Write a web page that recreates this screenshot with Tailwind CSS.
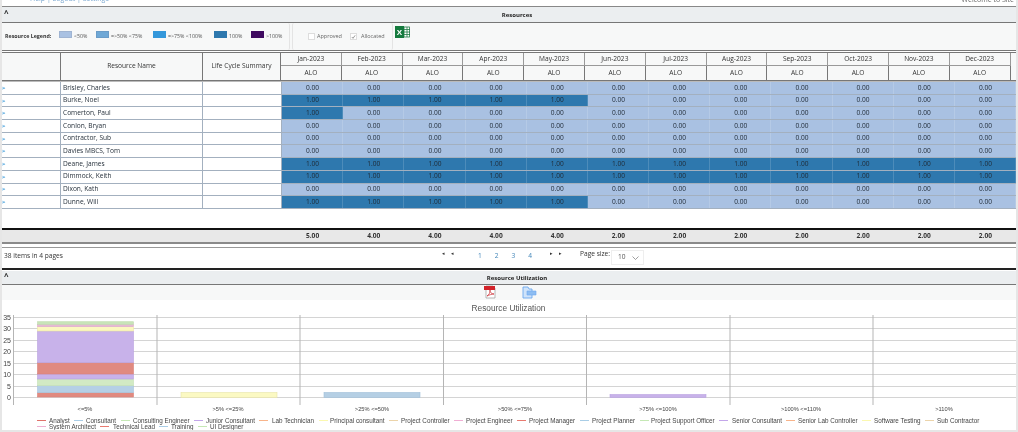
<!DOCTYPE html>
<html>
<head>
<meta charset="utf-8">
<script src="https://cdn.jsdelivr.net/npm/@tailwindcss/browser@4"></script>
</head>
<body class="bg-[#e4e4e4]">
<div class="w-[1018px] h-[432px] overflow-hidden bg-[#e6e6e6] px-[2px] pb-[2px] font-['Open_Sans',sans-serif] text-[6.6px] leading-none text-[#333] blur-[0.25px]">
<div class="w-[1014px] h-[430px] bg-white flex flex-col">

<div class="h-[6px] relative overflow-hidden border-b border-[#888] box-content">
  <span class="absolute left-[28px] top-[-5px] text-[7px] text-[#7aa7d0]">Help | Logout | Settings</span>
  <span class="absolute right-[2px] top-[-4px] text-[7px] text-[#666]">Welcome to Site</span>
</div>

<div class="h-[15px] bg-[#ebeef0] border-b border-[#777] box-content flex items-center relative">
  <span class="absolute left-[2px] top-[2px] text-[8px] font-bold text-[#222]">^</span>
  <span class="flex-1 text-center font-bold text-[6px] text-[#222] pl-[16px] pt-[1px]">Resources</span>
</div>

<div class="h-[27px] bg-[#f7f8f8] border-b border-[#777] box-content flex items-center">
  <div class="h-[27px] w-[288px] border-r border-[#e4e4e4] rounded-[2px] flex items-center pl-[3px] text-[5.3px] text-[#555]">
    <span class="font-bold text-[#333] w-[54px]">Resource Legend:</span>
    <span class="w-[13px] h-[7px] mt-[-5px] bg-[#a9c1e2] border border-[#9fb4d2]"></span><span class="ml-[2px] w-[22px]">&lt;50%</span>
    <span class="w-[13px] h-[7px] mt-[-5px] bg-[#6fa8d6] border border-[#6a9cc8]"></span><span class="ml-[2px] w-[42px]">=&gt;50% &lt;75%</span>
    <span class="w-[13px] h-[7px] mt-[-5px] bg-[#3498db]"></span><span class="ml-[2px] w-[46px]">=&gt;75% &lt;100%</span>
    <span class="w-[13px] h-[7px] mt-[-5px] bg-[#2e78ae]"></span><span class="ml-[2px] w-[22px]">100%</span>
    <span class="w-[13px] h-[7px] mt-[-5px] bg-[#3f0a60]"></span><span class="ml-[2px]">&gt;100%</span>
  </div>
  <div class="h-[27px] w-[101px] border-x border-[#e4e4e4] rounded-[2px] flex items-center pl-[15px] text-[5.5px] text-[#666] ml-[2px]">
    <span class="w-[7px] h-[7px] border border-[#ddd] bg-white"></span><span class="ml-[2px] w-[33px]">Approved</span>
    <span class="w-[7px] h-[7px] border border-[#ddd] bg-white flex items-center justify-center">
      <svg width="6" height="6" viewBox="0 0 6 6"><path d="M1 3l1.4 1.6L5 1" fill="none" stroke="#666" stroke-width=".8"/></svg>
    </span><span class="ml-[4px]">Allocated</span>
  </div>
  <svg class="ml-[2px] mt-[-10px]" width="15" height="12" viewBox="0 0 15 12">
    <rect x="6" y="1" width="8.5" height="10" fill="#fff" stroke="#1f7a45" stroke-width=".8"/>
    <path d="M9 1v10M12 1v10M6 3.5h9M6 6h9M6 8.5h9" stroke="#1f7a45" stroke-width=".8"/>
    <rect x="0" y="0" width="9" height="12" fill="#157a3e"/>
    <text x="4.5" y="9" text-anchor="middle" font-family="Liberation Sans" font-size="8" font-weight="700" fill="#fff">X</text>
  </svg>
</div>

<div class="h-[1px]"></div>

<div class="h-[27px] grid grid-cols-[59px_142px_78px_repeat(12,60.8px)] grid-rows-[13px_14px] bg-[#f7f8f8] border-y border-[#777] box-content text-[6.6px] text-[#333]">
  <div class="row-span-2 border-r border-[#777]"></div>
  <div class="row-span-2 border-r border-[#777] flex items-center justify-center">Resource Name</div>
  <div class="row-span-2 border-r border-[#777] flex items-center justify-center">Life Cycle Summary</div>
  <div class="border-r border-b border-[#999] flex items-center justify-center">Jan-2023</div>
  <div class="border-r border-b border-[#999] flex items-center justify-center">Feb-2023</div>
  <div class="border-r border-b border-[#999] flex items-center justify-center">Mar-2023</div>
  <div class="border-r border-b border-[#999] flex items-center justify-center">Apr-2023</div>
  <div class="border-r border-b border-[#999] flex items-center justify-center">May-2023</div>
  <div class="border-r border-b border-[#999] flex items-center justify-center">Jun-2023</div>
  <div class="border-r border-b border-[#999] flex items-center justify-center">Jul-2023</div>
  <div class="border-r border-b border-[#999] flex items-center justify-center">Aug-2023</div>
  <div class="border-r border-b border-[#999] flex items-center justify-center">Sep-2023</div>
  <div class="border-r border-b border-[#999] flex items-center justify-center">Oct-2023</div>
  <div class="border-r border-b border-[#999] flex items-center justify-center">Nov-2023</div>
  <div class="border-r border-b border-[#999] flex items-center justify-center">Dec-2023</div>
  <div class="border-r border-[#777] flex items-center justify-center">ALO</div>
  <div class="border-r border-[#777] flex items-center justify-center">ALO</div>
  <div class="border-r border-[#777] flex items-center justify-center">ALO</div>
  <div class="border-r border-[#777] flex items-center justify-center">ALO</div>
  <div class="border-r border-[#777] flex items-center justify-center">ALO</div>
  <div class="border-r border-[#777] flex items-center justify-center">ALO</div>
  <div class="border-r border-[#777] flex items-center justify-center">ALO</div>
  <div class="border-r border-[#777] flex items-center justify-center">ALO</div>
  <div class="border-r border-[#777] flex items-center justify-center">ALO</div>
  <div class="border-r border-[#777] flex items-center justify-center">ALO</div>
  <div class="border-r border-[#777] flex items-center justify-center">ALO</div>
  <div class="border-r border-[#777] flex items-center justify-center">ALO</div>
</div>

<div class="h-[1px] bg-[#bbb]"></div>

<div class="grid grid-cols-[59px_142px_79px_repeat(12,1fr)] auto-rows-[12.7px] h-[127px] text-[6.6px] text-[#1f2a35] [&>*]:flex [&>*]:items-center [&>*]:border-b [&>*]:border-[#a3b0bf] [&>*]:shadow-[inset_-1px_0_0_rgba(255,255,255,0.15)]">
  <div class="text-[#3a9ad9] text-[6px] font-bold border-r">&gt;</div><div class="border-r pl-[2px]">Brisley, Charles</div><div class="border-r"></div>
  <div class="bg-[#a9c1e2] justify-center">0.00</div><div class="bg-[#a9c1e2] justify-center">0.00</div><div class="bg-[#a9c1e2] justify-center">0.00</div><div class="bg-[#a9c1e2] justify-center">0.00</div><div class="bg-[#a9c1e2] justify-center">0.00</div><div class="bg-[#a9c1e2] justify-center">0.00</div><div class="bg-[#a9c1e2] justify-center">0.00</div><div class="bg-[#a9c1e2] justify-center">0.00</div><div class="bg-[#a9c1e2] justify-center">0.00</div><div class="bg-[#a9c1e2] justify-center">0.00</div><div class="bg-[#a9c1e2] justify-center">0.00</div><div class="bg-[#a9c1e2] justify-center">0.00</div>

  <div class="text-[#3a9ad9] text-[6px] font-bold border-r">&gt;</div><div class="border-r pl-[2px]">Burke, Noel</div><div class="border-r"></div>
  <div class="bg-[#2e78ae] justify-center">1.00</div><div class="bg-[#2e78ae] justify-center">1.00</div><div class="bg-[#2e78ae] justify-center">1.00</div><div class="bg-[#2e78ae] justify-center">1.00</div><div class="bg-[#2e78ae] justify-center">1.00</div><div class="bg-[#a9c1e2] justify-center">0.00</div><div class="bg-[#a9c1e2] justify-center">0.00</div><div class="bg-[#a9c1e2] justify-center">0.00</div><div class="bg-[#a9c1e2] justify-center">0.00</div><div class="bg-[#a9c1e2] justify-center">0.00</div><div class="bg-[#a9c1e2] justify-center">0.00</div><div class="bg-[#a9c1e2] justify-center">0.00</div>

  <div class="text-[#3a9ad9] text-[6px] font-bold border-r">&gt;</div><div class="border-r pl-[2px]">Comerton, Paul</div><div class="border-r"></div>
  <div class="bg-[#2e78ae] justify-center">1.00</div><div class="bg-[#a9c1e2] justify-center">0.00</div><div class="bg-[#a9c1e2] justify-center">0.00</div><div class="bg-[#a9c1e2] justify-center">0.00</div><div class="bg-[#a9c1e2] justify-center">0.00</div><div class="bg-[#a9c1e2] justify-center">0.00</div><div class="bg-[#a9c1e2] justify-center">0.00</div><div class="bg-[#a9c1e2] justify-center">0.00</div><div class="bg-[#a9c1e2] justify-center">0.00</div><div class="bg-[#a9c1e2] justify-center">0.00</div><div class="bg-[#a9c1e2] justify-center">0.00</div><div class="bg-[#a9c1e2] justify-center">0.00</div>

  <div class="text-[#3a9ad9] text-[6px] font-bold border-r">&gt;</div><div class="border-r pl-[2px]">Conlon, Bryan</div><div class="border-r"></div>
  <div class="bg-[#a9c1e2] justify-center">0.00</div><div class="bg-[#a9c1e2] justify-center">0.00</div><div class="bg-[#a9c1e2] justify-center">0.00</div><div class="bg-[#a9c1e2] justify-center">0.00</div><div class="bg-[#a9c1e2] justify-center">0.00</div><div class="bg-[#a9c1e2] justify-center">0.00</div><div class="bg-[#a9c1e2] justify-center">0.00</div><div class="bg-[#a9c1e2] justify-center">0.00</div><div class="bg-[#a9c1e2] justify-center">0.00</div><div class="bg-[#a9c1e2] justify-center">0.00</div><div class="bg-[#a9c1e2] justify-center">0.00</div><div class="bg-[#a9c1e2] justify-center">0.00</div>

  <div class="text-[#3a9ad9] text-[6px] font-bold border-r">&gt;</div><div class="border-r pl-[2px]">Contractor, Sub</div><div class="border-r"></div>
  <div class="bg-[#a9c1e2] justify-center">0.00</div><div class="bg-[#a9c1e2] justify-center">0.00</div><div class="bg-[#a9c1e2] justify-center">0.00</div><div class="bg-[#a9c1e2] justify-center">0.00</div><div class="bg-[#a9c1e2] justify-center">0.00</div><div class="bg-[#a9c1e2] justify-center">0.00</div><div class="bg-[#a9c1e2] justify-center">0.00</div><div class="bg-[#a9c1e2] justify-center">0.00</div><div class="bg-[#a9c1e2] justify-center">0.00</div><div class="bg-[#a9c1e2] justify-center">0.00</div><div class="bg-[#a9c1e2] justify-center">0.00</div><div class="bg-[#a9c1e2] justify-center">0.00</div>

  <div class="text-[#3a9ad9] text-[6px] font-bold border-r">&gt;</div><div class="border-r pl-[2px]">Davies MBCS, Tom</div><div class="border-r"></div>
  <div class="bg-[#a9c1e2] justify-center">0.00</div><div class="bg-[#a9c1e2] justify-center">0.00</div><div class="bg-[#a9c1e2] justify-center">0.00</div><div class="bg-[#a9c1e2] justify-center">0.00</div><div class="bg-[#a9c1e2] justify-center">0.00</div><div class="bg-[#a9c1e2] justify-center">0.00</div><div class="bg-[#a9c1e2] justify-center">0.00</div><div class="bg-[#a9c1e2] justify-center">0.00</div><div class="bg-[#a9c1e2] justify-center">0.00</div><div class="bg-[#a9c1e2] justify-center">0.00</div><div class="bg-[#a9c1e2] justify-center">0.00</div><div class="bg-[#a9c1e2] justify-center">0.00</div>

  <div class="text-[#3a9ad9] text-[6px] font-bold border-r">&gt;</div><div class="border-r pl-[2px]">Deane, James</div><div class="border-r"></div>
  <div class="bg-[#2e78ae] justify-center">1.00</div><div class="bg-[#2e78ae] justify-center">1.00</div><div class="bg-[#2e78ae] justify-center">1.00</div><div class="bg-[#2e78ae] justify-center">1.00</div><div class="bg-[#2e78ae] justify-center">1.00</div><div class="bg-[#2e78ae] justify-center">1.00</div><div class="bg-[#2e78ae] justify-center">1.00</div><div class="bg-[#2e78ae] justify-center">1.00</div><div class="bg-[#2e78ae] justify-center">1.00</div><div class="bg-[#2e78ae] justify-center">1.00</div><div class="bg-[#2e78ae] justify-center">1.00</div><div class="bg-[#2e78ae] justify-center">1.00</div>

  <div class="text-[#3a9ad9] text-[6px] font-bold border-r">&gt;</div><div class="border-r pl-[2px]">Dimmock, Keith</div><div class="border-r"></div>
  <div class="bg-[#2e78ae] justify-center">1.00</div><div class="bg-[#2e78ae] justify-center">1.00</div><div class="bg-[#2e78ae] justify-center">1.00</div><div class="bg-[#2e78ae] justify-center">1.00</div><div class="bg-[#2e78ae] justify-center">1.00</div><div class="bg-[#2e78ae] justify-center">1.00</div><div class="bg-[#2e78ae] justify-center">1.00</div><div class="bg-[#2e78ae] justify-center">1.00</div><div class="bg-[#2e78ae] justify-center">1.00</div><div class="bg-[#2e78ae] justify-center">1.00</div><div class="bg-[#2e78ae] justify-center">1.00</div><div class="bg-[#2e78ae] justify-center">1.00</div>

  <div class="text-[#3a9ad9] text-[6px] font-bold border-r">&gt;</div><div class="border-r pl-[2px]">Dixon, Kath</div><div class="border-r"></div>
  <div class="bg-[#a9c1e2] justify-center">0.00</div><div class="bg-[#a9c1e2] justify-center">0.00</div><div class="bg-[#a9c1e2] justify-center">0.00</div><div class="bg-[#a9c1e2] justify-center">0.00</div><div class="bg-[#a9c1e2] justify-center">0.00</div><div class="bg-[#a9c1e2] justify-center">0.00</div><div class="bg-[#a9c1e2] justify-center">0.00</div><div class="bg-[#a9c1e2] justify-center">0.00</div><div class="bg-[#a9c1e2] justify-center">0.00</div><div class="bg-[#a9c1e2] justify-center">0.00</div><div class="bg-[#a9c1e2] justify-center">0.00</div><div class="bg-[#a9c1e2] justify-center">0.00</div>

  <div class="text-[#3a9ad9] text-[6px] font-bold border-r">&gt;</div><div class="border-r pl-[2px]">Dunne, Will</div><div class="border-r"></div>
  <div class="bg-[#2e78ae] justify-center">1.00</div><div class="bg-[#2e78ae] justify-center">1.00</div><div class="bg-[#2e78ae] justify-center">1.00</div><div class="bg-[#2e78ae] justify-center">1.00</div><div class="bg-[#2e78ae] justify-center">1.00</div><div class="bg-[#a9c1e2] justify-center">0.00</div><div class="bg-[#a9c1e2] justify-center">0.00</div><div class="bg-[#a9c1e2] justify-center">0.00</div><div class="bg-[#a9c1e2] justify-center">0.00</div><div class="bg-[#a9c1e2] justify-center">0.00</div><div class="bg-[#a9c1e2] justify-center">0.00</div><div class="bg-[#a9c1e2] justify-center">0.00</div>
</div>

<div class="h-[19px]"></div>

<div class="h-[12px] grid grid-cols-[59px_142px_79px_repeat(12,1fr)] bg-[#e8e8e8] border-t-2 border-[#111] box-content font-bold text-[#333] [&>*]:flex [&>*]:items-center [&>*]:justify-center">
  <div></div><div></div><div></div>
  <div>5.00</div><div>4.00</div><div>4.00</div><div>4.00</div><div>4.00</div><div>2.00</div><div>2.00</div><div>2.00</div><div>2.00</div><div>2.00</div><div>2.00</div><div>2.00</div>
</div>
<div class="h-[2px] bg-[#8a8a8a]"></div>
<div class="h-[3px]"></div>

<div class="h-[20px] border-t border-[#999] border-b-2 border-b-[#222] box-content flex items-center text-[#333] relative">
  <span class="ml-[2px] mt-[-3px]">38 items in 4 pages</span>
  <div class="absolute left-[440px] top-[3px] flex gap-[6px] text-[5px] text-[#333]"><span>◂</span><span>◂</span></div>
  <div class="absolute left-[476px] top-[5px] flex gap-[13px] text-[#3f84b8]"><span>1</span><span>2</span><span>3</span><span>4</span></div>
  <div class="absolute left-[548px] top-[3px] flex gap-[6px] text-[5px] text-[#333]"><span>▸</span><span>▸</span></div>
  <span class="absolute left-[578px] top-[3px]">Page size:</span>
  <div class="absolute left-[609px] top-[2px] w-[33px] h-[15px] border border-[#eee] flex items-center pl-[6px] text-[#555]">10
    <svg class="ml-[6px]" width="7" height="4" viewBox="0 0 7 4"><path d="M.5.5l3 3 3-3" fill="none" stroke="#777" stroke-width=".7"/></svg>
  </div>
</div>

<div class="h-[1px]"></div>

<div class="h-[13px] bg-[#ebeef0] border-b border-[#777] box-content flex items-center relative">
  <span class="absolute left-[2px] top-[1px] text-[8px] font-bold text-[#222]">^</span>
  <span class="flex-1 text-center font-bold text-[6px] text-[#222] pl-[16px]">Resource Utilization</span>
</div>

<div class="h-[15px] bg-[#f7f8f8] flex relative">
  <svg class="absolute left-[481px] top-[0px]" width="14" height="14" viewBox="0 0 14 14">
    <path d="M3 1h7l2 2v10H3z" fill="#fff" stroke="#999" stroke-width=".7"/>
    <rect x="1" y="1" width="11" height="4" fill="#d2232a"/>
    <path d="M4 11c2-1 3-3 3-6 0 2 1 4 4 4-2 0-5 1-7 2z" fill="none" stroke="#c9252b" stroke-width=".7"/>
  </svg>
  <svg class="absolute left-[520px] top-[1px]" width="15" height="13" viewBox="0 0 15 13">
    <path d="M1 1h5l1 2h3v9H1z" fill="#cfe3fa" stroke="#6ba8ee" stroke-width=".9"/>
    <path d="M5 5h9v4H5z" fill="#8dbdf2" stroke="#6ba8ee" stroke-width=".6"/>
  </svg>
</div>

<svg class="block" width="1014" height="130" viewBox="2 300 1014 130" font-family="Liberation Sans" font-size="6.3" fill="#444">
  <text x="508.5" y="311" text-anchor="middle" font-size="8.3" fill="#555">Resource Utilization</text>
  <g stroke="#d4d4d4" stroke-width="1">
    <path d="M13 317.5H1016M13 328.5H1016M13 340.5H1016M13 351.5H1016M13 363.5H1016M13 374.5H1016M13 386.5H1016M13 397.5H1016"/>
  </g>
  <path d="M13.5 315V405M157 315V405M300 315V405M443.5 315V405M586.5 315V405M730 315V405M873 315V405" stroke="#b5b5b5" stroke-width="1"/>
  <g font-size="7" fill="#444">
    <text x="11" y="320" text-anchor="end">35</text><text x="11" y="331" text-anchor="end">30</text><text x="11" y="343" text-anchor="end">25</text><text x="11" y="354" text-anchor="end">20</text><text x="11" y="366" text-anchor="end">15</text><text x="11" y="377" text-anchor="end">10</text><text x="11" y="389" text-anchor="end">5</text><text x="11" y="400" text-anchor="end">0</text>
  </g>
  <g stroke-width=".6">
    <rect x="37.5" y="392.7" width="96" height="4.3" fill="#e08a80" stroke="#d98078"/>
    <rect x="37.5" y="385.7" width="96" height="7" fill="#b5d0e6" stroke="#a5c4de"/>
    <rect x="37.5" y="379" width="96" height="6.7" fill="#d2eac4" stroke="#c4e0b5"/>
    <rect x="37.5" y="374" width="96" height="5" fill="#c8b2ea" stroke="#b9a2e0"/>
    <rect x="37.5" y="362.7" width="96" height="11.3" fill="#e08a80" stroke="#d98078"/>
    <rect x="37.5" y="331" width="96" height="31.7" fill="#c8b2ea" stroke="#b9a2e0"/>
    <rect x="37.5" y="326.7" width="96" height="4.3" fill="#fbf7bf" stroke="#eee9a5"/>
    <rect x="37.5" y="324.3" width="96" height="2.4" fill="#e6b9d4" stroke="#dcaacb"/>
    <rect x="37.5" y="321.7" width="96" height="2.6" fill="#c8e4b8" stroke="#c0dcae"/>
    <rect x="181" y="392.5" width="96" height="5" fill="#fbf9c3" stroke="#e8e4a8"/>
    <rect x="324" y="392.5" width="96" height="5" fill="#b5cfe4" stroke="#9fbfd9"/>
    <rect x="610" y="394.5" width="96" height="3" fill="#c8b2ea" stroke="#b9a2e0"/>
  </g>
  <g font-size="5.7" fill="#444" text-anchor="middle">
    <text x="85" y="411">&lt;=5%</text><text x="228" y="411">&gt;5% &lt;=25%</text><text x="372" y="411">&gt;25% &lt;=50%</text><text x="515" y="411">&gt;50% &lt;=75%</text><text x="658" y="411">&gt;75% &lt;=100%</text><text x="801" y="411">&gt;100% &lt;=110%</text><text x="944" y="411">&gt;110%</text>
  </g>
  <g stroke-width="1">
    <path d="M37 420.5h9" stroke="#e0726a"/><path d="M74 420.5h9" stroke="#a9cde6"/><path d="M121 420.5h9" stroke="#c5e8b5"/><path d="M194 420.5h9" stroke="#c3a6ea"/><path d="M259 420.5h9" stroke="#f8b48a"/><path d="M319 420.5h9" stroke="#fbf8b0"/><path d="M389 420.5h9" stroke="#ecd4aa"/><path d="M454 420.5h9" stroke="#f0aed4"/><path d="M517 420.5h9" stroke="#e87a70"/><path d="M580 420.5h9" stroke="#a9cde6"/><path d="M640 420.5h9" stroke="#c5e8b5"/><path d="M719 420.5h9" stroke="#c3a6ea"/><path d="M786 420.5h9" stroke="#f8b48a"/><path d="M862 420.5h9" stroke="#fbf8b0"/><path d="M925 420.5h9" stroke="#ecd4aa"/>
    <path d="M37 426.5h9" stroke="#eeb0d0"/><path d="M100 426.5h9" stroke="#e87a70"/><path d="M159 426.5h9" stroke="#a9cde6"/><path d="M198 426.5h9" stroke="#c5e8b5"/>
  </g>
  <text x="49" y="423">Analyst</text><text x="86" y="423">Consultant</text><text x="133" y="423">Consulting Engineer</text><text x="206" y="423">Junior Consultant</text><text x="272" y="423">Lab Technician</text><text x="330" y="423">Principal consultant</text><text x="401" y="423">Project Controller</text><text x="466" y="423">Project Engineer</text><text x="529" y="423">Project Manager</text><text x="592" y="423">Project Planner</text><text x="651" y="423">Project Support Officer</text><text x="732" y="423">Senior Consultant</text><text x="798" y="423">Senior Lab Controller</text><text x="874" y="423">Software Testing</text><text x="937" y="423">Sub Contractor</text>
  <text x="49" y="429">System Architect</text><text x="113" y="429">Technical Lead</text><text x="171" y="429">Training</text><text x="210" y="429">UI Designer</text>
</svg>
</div>
</div>
</body>
</html>
